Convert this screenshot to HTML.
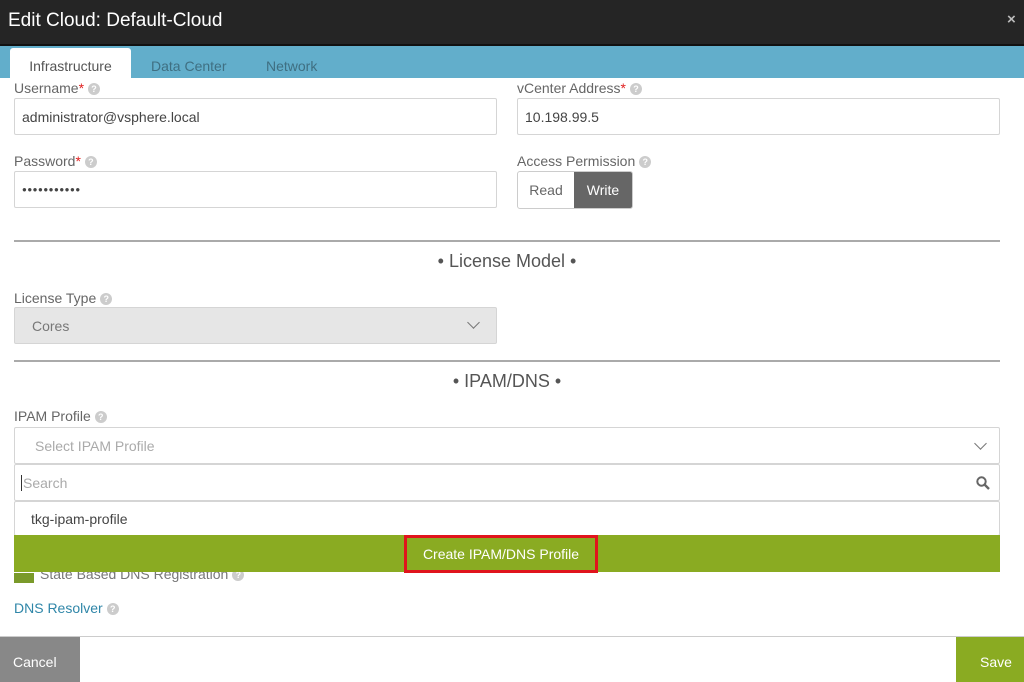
<!DOCTYPE html>
<html><head><style>
*{box-sizing:border-box;margin:0;padding:0}
body{width:1024px;height:682px;overflow:hidden;background:#fff;font-family:"Liberation Sans",sans-serif;position:relative;color:#555}
.a{position:absolute}
.hdr{left:0;top:0;width:1024px;height:44px;background:#252525;color:#fff;font-size:19px;padding:10px 8px}
.tabs{left:0;top:44px;width:1024px;height:34px;background:#62aecb;border-top:2px solid #111}
.tab{top:12px;font-size:14px;color:#3f6f82}
.lbl{font-size:14px;color:#666}
.lbl b{color:#e02020;font-weight:normal}
.q{display:inline-block;width:12px;height:12px;border-radius:50%;background:#ccc;color:#fff;font-size:9px;text-align:center;line-height:12px;font-weight:bold;vertical-align:1px;margin-left:4px}
.in{border:1px solid #d5d5d5;border-radius:2px;background:#fff;font-size:14px;color:#444;padding:0 7px;display:flex;align-items:center}
.div{left:14px;width:986px;border-top:2px solid #aaa;height:38px;text-align:center;font-size:18px;color:#555;padding-top:9px}
.chev{position:absolute;right:14px;top:10px;width:9px;height:9px;border-right:1.5px solid #777;border-bottom:1.5px solid #777;transform:rotate(45deg)}
</style></head><body>
<div class="a hdr">Edit Cloud: Default-Cloud</div>
<div class="a" style="left:1007px;top:11px;color:#bbb;font-size:15px;font-weight:bold">×</div>
<div class="a tabs"></div>
<div class="a" style="left:10px;top:48px;width:121px;height:31px;background:#fff;border-radius:3px 3px 0 0;font-size:14px;color:#555;text-align:center;padding-top:10px">Infrastructure</div>
<div class="a tab" style="left:151px;top:58px">Data Center</div>
<div class="a tab" style="left:266px;top:58px">Network</div>

<div class="a lbl" style="left:14px;top:80px">Username<b>*</b><span class="q">?</span></div>
<div class="a in" style="left:14px;top:98px;width:483px;height:37px">administrator@vsphere.local</div>
<div class="a lbl" style="left:517px;top:80px">vCenter Address<b>*</b><span class="q">?</span></div>
<div class="a in" style="left:517px;top:98px;width:483px;height:37px">10.198.99.5</div>

<div class="a lbl" style="left:14px;top:153px">Password<b>*</b><span class="q">?</span></div>
<div class="a in" style="left:14px;top:171px;width:483px;height:37px;font-size:8px;letter-spacing:0.5px">●●●●●●●●●●●</div>
<div class="a lbl" style="left:517px;top:153px">Access Permission<span class="q">?</span></div>
<div class="a" style="left:517px;top:171px;width:116px;height:38px;border:1px solid #ccc;border-radius:3px;overflow:hidden;display:flex;font-size:14px">
<div style="width:56px;text-align:center;padding-top:10px;color:#666">Read</div>
<div style="flex:1;background:#666;color:#fff;text-align:center;padding-top:10px">Write</div></div>

<div class="a div" style="top:240px">• License Model •</div>
<div class="a lbl" style="left:14px;top:290px">License Type<span class="q">?</span></div>
<div class="a in" style="left:14px;top:307px;width:483px;height:37px;background:#e6e6e6;color:#777;padding-left:17px">Cores<div class="chev" style="right:18px;top:10px"></div></div>

<div class="a div" style="top:360px">• IPAM/DNS •</div>
<div class="a lbl" style="left:14px;top:408px">IPAM Profile<span class="q">?</span></div>
<div class="a in" style="left:14px;top:427px;width:986px;height:37px;color:#aaa;padding-left:20px">Select IPAM Profile<div class="chev" style="top:11px"></div></div>
<div class="a in" style="left:14px;top:464px;width:986px;height:37px;color:#aaa;padding-left:6px"><span style="border-left:1px solid #333;padding-left:1px">Search</span>
<svg style="position:absolute;right:9px;top:11px" width="14" height="14" viewBox="0 0 14 14"><circle cx="5.5" cy="5.5" r="4.2" fill="none" stroke="#666" stroke-width="2"/><path d="M8.5 8.5L13 13" stroke="#666" stroke-width="2.4"/></svg></div>
<div class="a in" style="left:14px;top:501px;width:986px;height:35px;padding-left:16px;color:#444">tkg-ipam-profile</div>
<div class="a" style="left:14px;top:573px;width:20px;height:10px;background:#7a9a2a"></div>
<div class="a" style="left:40px;top:566px;font-size:14px;color:#777">State Based DNS Registration<span class="q">?</span></div>
<div class="a" style="left:14px;top:535px;width:986px;height:37px;background:#8aab22"></div>
<div class="a" style="left:404px;top:535px;width:194px;height:38px;border:3px solid #e0141c;color:#fff;font-size:14px;text-align:center;padding-top:8px">Create IPAM/DNS Profile</div>
<div class="a" style="left:14px;top:600px;font-size:14px;color:#2f86a8">DNS Resolver<span class="q">?</span></div>

<div class="a" style="left:0;top:636px;width:1024px;height:46px;border-top:1px solid #ccc;background:#fff"></div>
<div class="a" style="left:0;top:637px;width:80px;height:45px;background:#888;color:#fff;font-size:14px;padding:17px 0 0 13px">Cancel</div>
<div class="a" style="left:956px;top:637px;width:68px;height:45px;background:#8aab22;color:#fff;font-size:14px;padding:17px 0 0 24px">Save</div>
</body></html>
